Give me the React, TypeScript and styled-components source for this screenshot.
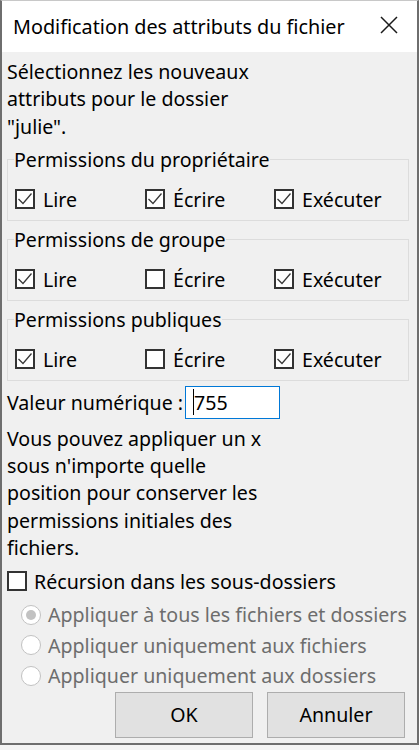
import React from "react";
import styled, { createGlobalStyle } from "styled-components";

const Global = createGlobalStyle`
  html, body { margin: 0; padding: 0; background: #f4f4f4; }
  body { font-family: "Noto Sans", "Open Sans", sans-serif; font-size: 19.6px; color: #000; }
  * { box-sizing: border-box; }
`;

const Window = styled.div`
  width: 419px;
  height: 745px;
  background: #f0f0f0;
  border-top: 1px solid #c8c8c8;
  border-left: 2px solid #6e6e6e;
  border-right: 2px solid #6e6e6e;
  border-bottom: 2px solid #6e6e6e;
  display: flex;
  flex-direction: column;
`;

const TitleBar = styled.div`
  height: 51px;
  flex: none;
  background: #fff;
  display: flex;
  align-items: center;
  justify-content: space-between;
  padding-left: 11px;
  padding-right: 18px;
`;

const Title = styled.div`
  font-size: 19.8px;
  line-height: 27px;
  color: #000;
  white-space: nowrap;
`;

const Close = styled.button`
  width: 20px;
  height: 20px;
  border: 0;
  padding: 0;
  background: transparent;
  display: flex;
  align-items: center;
  justify-content: center;
  margin-top: -3px;
`;

const Body = styled.div`
  flex: 1;
  padding: 6px 8px 0 5px;
  display: flex;
  flex-direction: column;
`;

const Text = styled.p<{ $mt?: number }>`
  margin: ${(p) => p.$mt ?? 0}px 0 0 0;
  line-height: 27.3px;
`;

const Group = styled.fieldset<{ $mt: number }>`
  margin: ${(p) => p.$mt}px 0 0 0;
  border: 1px solid #dcdcdc;
  padding: 0 0 7px 6px;
`;

const Legend = styled.legend`
  padding: 0;
  line-height: 26px;
`;

const CheckRow = styled.div`
  display: grid;
  grid-template-columns: 130px 129px auto;
  margin: 14px 0 0 1px;
  height: 26px;
`;

const CheckItem = styled.label<{ $gap?: number }>`
  display: flex;
  align-items: center;
  gap: ${(p) => p.$gap ?? 8}px;
  line-height: 26px;
  white-space: nowrap;
`;

const Box = styled.span`
  width: 20px;
  height: 20px;
  flex: none;
  border: 2px solid #333;
  background: #fff;
  display: flex;
  align-items: center;
  justify-content: center;
  margin-top: -2px;
`;

const ValueRow = styled.div`
  display: flex;
  align-items: center;
  margin-top: 5px;
  gap: 2px;
  white-space: nowrap;
`;

const Input = styled.div`
  width: 95px;
  height: 33px;
  border: 1px solid #0078d7;
  background: #fff;
  display: flex;
  align-items: center;
  padding-left: 7px;
  line-height: 27px;
`;

const Caret = styled.span`
  width: 1px;
  height: 26px;
  background: #000;
`;

const RecRow = styled.div`
  margin-top: 10px;
  height: 22px;
  display: flex;
  align-items: center;
`;

const Radios = styled.div`
  margin-top: 6px;
  padding-left: 14px;
  display: flex;
  flex-direction: column;
`;

const RadioItem = styled.div`
  height: 30.5px;
  display: flex;
  align-items: center;
  gap: 7px;
  color: #6d6d6d;
  white-space: nowrap;
`;

const RadioCircle = styled.span<{ $on?: boolean }>`
  width: 20px;
  height: 20px;
  border-radius: 50%;
  border: 1.5px solid #c2c2c2;
  background: #fff;
  flex: none;
  display: flex;
  align-items: center;
  justify-content: center;
  &::after {
    content: "";
    display: ${(p) => (p.$on ? "block" : "none")};
    width: 10px;
    height: 10px;
    border-radius: 50%;
    background: #c2c2c2;
  }
`;

const Buttons = styled.div`
  margin-top: 1px;
  display: flex;
  justify-content: flex-end;
  gap: 14px;
  padding-right: 4px;
`;

const Button = styled.button`
  width: 138px;
  height: 46px;
  background: #e1e1e1;
  border: 1px solid #adadad;
  font-family: inherit;
  font-size: 19.6px;
  color: #000;
  padding: 0;
`;

const Check = () => (
  <svg width="16" height="16" viewBox="0 0 16 16">
    <path d="M1.5 8 L6 12.5 L14.5 2.5" fill="none" stroke="#3a3a3a" strokeWidth="1.3" />
  </svg>
);

const CheckBox = ({ on }: { on: boolean }) => <Box>{on ? <Check /> : null}</Box>;

const groups = [
  { title: "Permissions du propriétaire", v: [true, true, true], mt: 7 },
  { title: "Permissions de groupe", v: [true, false, true], mt: 6 },
  { title: "Permissions publiques", v: [true, false, true], mt: 6 },
];

const labels = ["Lire", "Écrire", "Exécuter"];

export default function App() {
  return (
    <>
      <Global />
      <Window>
        <TitleBar>
          <Title>Modification des attributs du fichier</Title>
          <Close aria-label="Fermer">
            <svg width="18" height="18" viewBox="0 0 18 18">
              <path d="M1 1 L17 17 M17 1 L1 17" stroke="#1a1a1a" strokeWidth="1.5" />
            </svg>
          </Close>
        </TitleBar>
        <Body>
          <Text>
            Sélectionnez les nouveaux
            <br />
            attributs pour le dossier
            <br />
            "julie".
          </Text>
          {groups.map((g) => (
            <Group key={g.title} $mt={g.mt}>
              <Legend>{g.title}</Legend>
              <CheckRow>
                {labels.map((l, i) => (
                  <CheckItem key={l}>
                    <CheckBox on={g.v[i]} />
                    {l}
                  </CheckItem>
                ))}
              </CheckRow>
            </Group>
          ))}
          <ValueRow>
            Valeur numérique :
            <Input>
              <Caret />
              755
            </Input>
          </ValueRow>
          <Text $mt={6}>
            Vous pouvez appliquer un x
            <br />
            sous n'importe quelle
            <br />
            position pour conserver les
            <br />
            permissions initiales des
            <br />
            fichiers.
          </Text>
          <RecRow>
            <CheckItem $gap={7}>
              <CheckBox on={false} />
              Récursion dans les sous-dossiers
            </CheckItem>
          </RecRow>
          <Radios>
            <RadioItem>
              <RadioCircle $on />
              Appliquer à tous les fichiers et dossiers
            </RadioItem>
            <RadioItem>
              <RadioCircle />
              Appliquer uniquement aux fichiers
            </RadioItem>
            <RadioItem>
              <RadioCircle />
              Appliquer uniquement aux dossiers
            </RadioItem>
          </Radios>
          <Buttons>
            <Button>OK</Button>
            <Button>Annuler</Button>
          </Buttons>
        </Body>
      </Window>
    </>
  );
}
